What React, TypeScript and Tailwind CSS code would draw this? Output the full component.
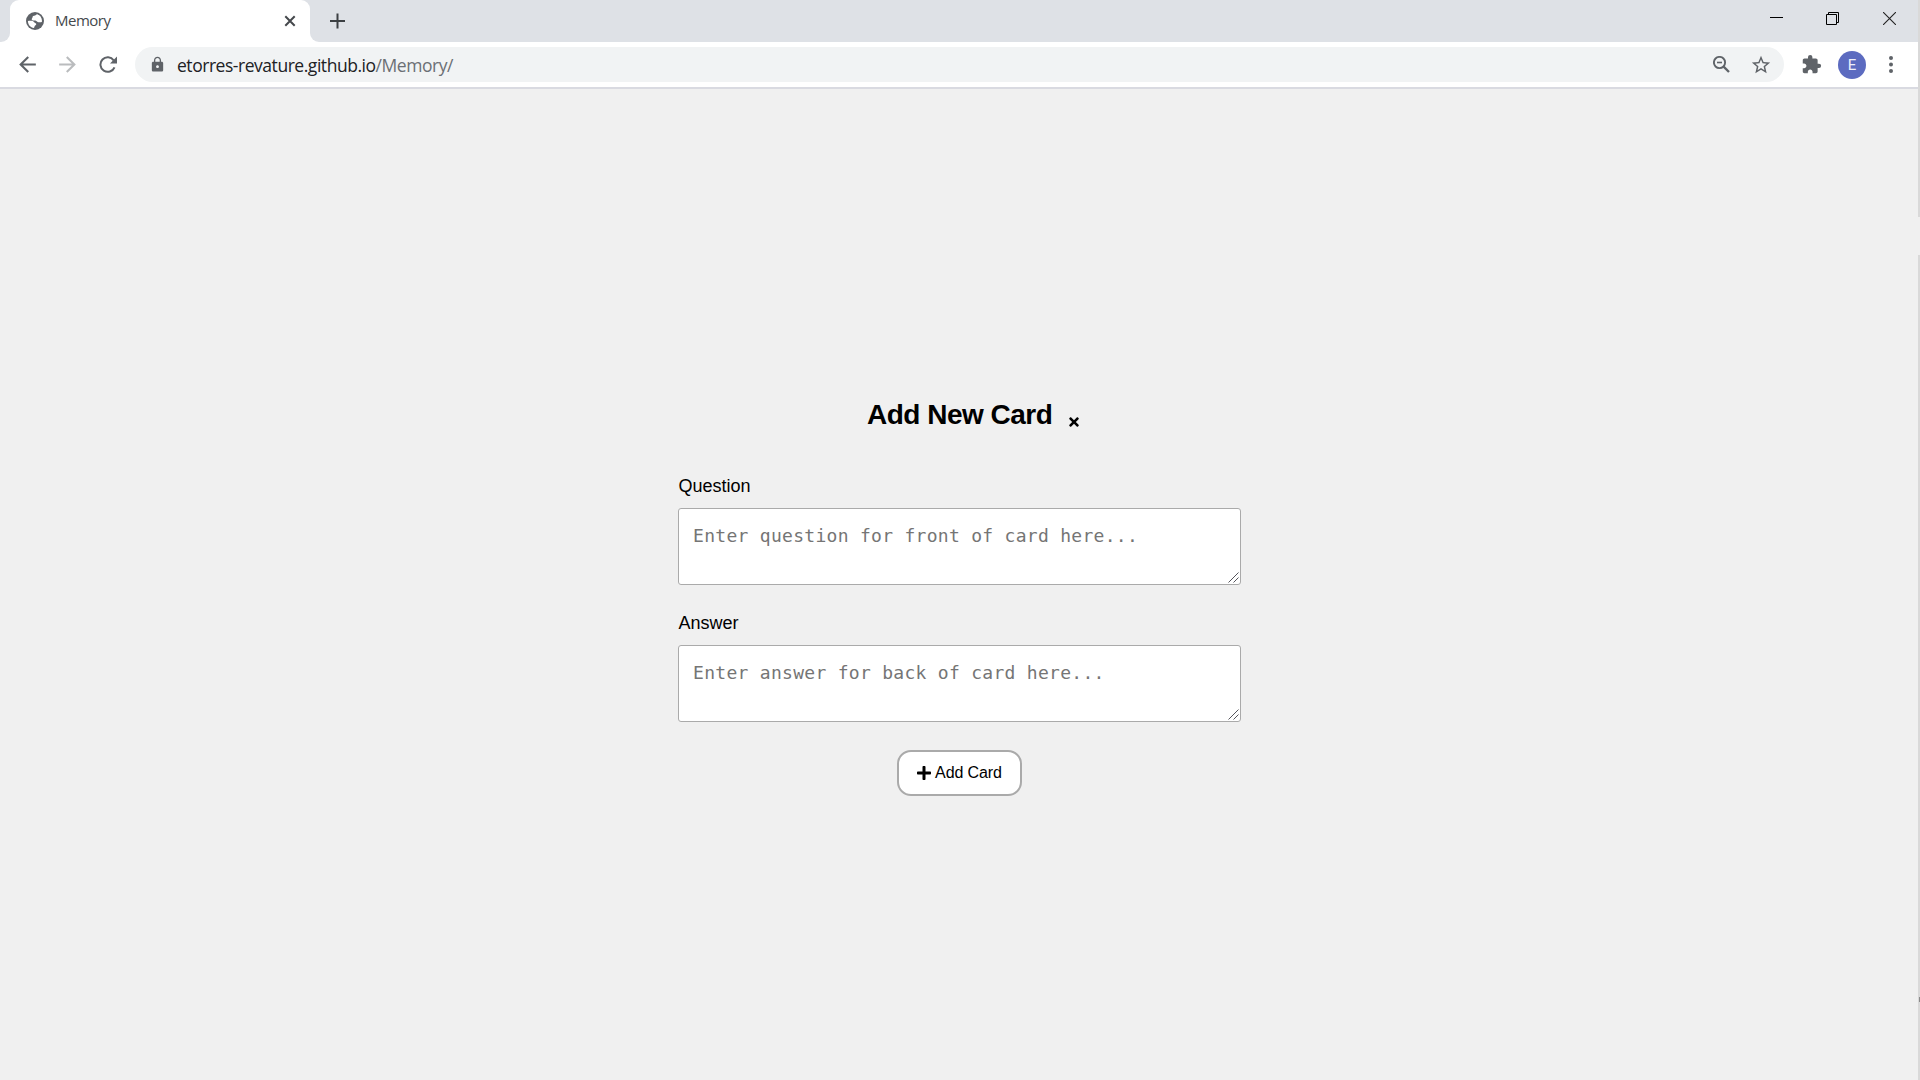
import React from 'react';
import { MdArrowBack, MdArrowForward, MdExtension, MdLock, MdStarBorder } from 'react-icons/md';
import { FaPlus, FaTimes } from 'react-icons/fa';

function Globe() {
  return (
    <svg className="h-[18px] w-[18px] shrink-0" viewBox="0 0 18 18">
      <circle cx="9" cy="9" r="9" fill="#5f6368" />
      <path d="M10.800 2.200C9.800 3.800 8.300 3.200 7.200 4c-1 .7-.4 1.600-1.100 2.300-.8.900-.3 2.100 1 2.200 1.600.1 3.200-.2 3.900 1.100.6 1 1.800.8 2.600.6.9-.2 1.300.1 2.300-.1.500-3.600-1.400-6.900-5.100-7.900Z" fill="#fff" />
      <path d="M11.300 2.400c1.500.5 2.600 1.400 3.400 2.600-.9 1.300-2.400 1.700-3.700 1.400-1-.3-1.300-1-.8-1.800.4-.7 1-1.200 1.100-2.200Z" fill="#fff" />
      <path d="M1.900 9c1.500-.4 3.400-.5 4.800.1 1.300.5 1.200 1.700 2.500 1.900 1.400.3 1.400 1.600.3 2.200-1 .5-.8 1.600-1.600 2.700C4.400 15.500 1.900 12.600 1.900 9Z" fill="#fff" />
    </svg>
  );
}

function TabBar() {
  return (
    <div className="flex h-[42px] bg-[#dee1e6]">
      <div className="flex w-[10px] shrink-0 items-end bg-white">
        <div className="h-full w-full rounded-br-[9px] bg-[#dee1e6]" />
      </div>
      <div className="w-[300px] shrink-0 bg-[#dee1e6]">
        <div className="flex h-[42px] items-center rounded-t-[9px] bg-white pl-4 pr-[14px]">
          <Globe />
          <span className="-mt-0.5 ml-[11px] flex-1 text-[15px] leading-5 tracking-[-0.500px] text-[#45494d]">Memory</span>
          <svg className="h-3 w-3" viewBox="0 0 12 12" stroke="#45484c" strokeWidth="2">
            <path d="M1.300 1.300 10.700 10.700M10.700 1.300 1.300 10.700" />
          </svg>
        </div>
      </div>
      <div className="w-[10px] shrink-0 bg-white">
        <div className="h-full w-full rounded-bl-[9px] bg-[#dee1e6]" />
      </div>
      <svg className="ml-[10px] mt-[13px] h-4 w-4" viewBox="0 0 16 16" stroke="#3c4043" strokeWidth="2">
        <path d="M0 8h15M7.500 .5v15" />
      </svg>
      <div className="flex-1" />
      <div className="flex pt-[12px]">
        <svg className="mr-[43px] h-[13px] w-[13px]" viewBox="0 0 13 13">
          <path d="M0 5.500h13" stroke="#000" />
        </svg>
        <svg className="mr-[44px] h-[13px] w-[13px]" viewBox="0 0 13 13" fill="none" stroke="#000">
          <path d="M.5 2.500h10v10H.5zM2.500 2.500v-2h10v10h-2" />
        </svg>
        <svg className="mr-[22px] h-[13px] w-[13px]" viewBox="0 0 13 13" stroke="#222" strokeWidth="1.100">
          <path d="M0 0 13 13M13 0 0 13" />
        </svg>
      </div>
    </div>
  );
}

function Toolbar() {
  return (
    <div className="flex h-[47px] items-center border-b-2 border-[#d9dae1] bg-white text-[#5f6368]">
      <MdArrowBack className="ml-[15px] h-[25px] w-[25px] shrink-0" />
      <MdArrowForward className="ml-[15px] h-[25px] w-[25px] shrink-0 text-[#babcbe]" />
      <svg className="ml-[19px] h-[18px] w-[18px] shrink-0" viewBox="0 0 18 18" fill="none" stroke="#5f6368" strokeWidth="2">
        <path d="M14.700 4.300A7.300 7.300 0 1 0 15.500 11.300" />
        <path d="M18 .5V7.500H11Z" fill="#5f6368" stroke="none" />
      </svg>
      <div className="ml-[18px] flex h-[35px] flex-1 items-center rounded-full bg-[#f1f3f4] pl-[14px] pr-[12px]">
        <MdLock className="h-[17px] w-[17px] shrink-0" />
        <span className="ml-[11px] flex-1 whitespace-nowrap text-[17.500px] leading-6 tracking-[-0.460px] text-[#202124]">
          etorres-revature.github.io<span className="text-[#6b6f74]">/Memory/</span>
        </span>
        <svg className="h-[17px] w-[17px]" viewBox="0 0 17 17" fill="none" stroke="#5f6368">
          <circle cx="6.500" cy="6.500" r="5.600" strokeWidth="1.900" />
          <path d="M4 6.500h5" strokeWidth="1.600" />
          <path d="M10.600 10.600 16 16" strokeWidth="2.300" />
        </svg>
        <MdStarBorder className="ml-[20px] h-[22px] w-[22px]" />
      </div>
      <MdExtension className="ml-[17px] h-[21px] w-[21px]" />
      <div className="ml-[16px] flex h-[28px] w-[28px] items-center justify-center rounded-full bg-[#5c6bc0] pt-px font-['Roboto',sans-serif] text-[15px] text-[#eef0fa]">
        E
      </div>
      <svg className="ml-[23px] mr-[25px] h-[17px] w-1" viewBox="0 0 4 17" fill="#5f6368">
        <circle cx="2" cy="2" r="2" />
        <circle cx="2" cy="8.500" r="2" />
        <circle cx="2" cy="15" r="2" />
      </svg>
    </div>
  );
}

function Field({ label, placeholder }: { label: string; placeholder: string }) {
  return (
    <label className="mb-[26px] block">
      <span className="mb-[10px] block h-[24px] pl-px text-[18px] leading-6 text-black">{label}</span>
      <span className="relative block h-[77px]">
        <textarea
          className="block h-[77px] w-full resize-none overflow-hidden rounded-[3px] border border-[#aaa] bg-white px-[14.500px] py-[15px] font-['DejaVu_Sans_Mono',monospace] text-[18px] leading-6 tracking-[0.290px] outline-none placeholder:text-[#757575]"
          placeholder={placeholder}
        />
        <svg className="absolute bottom-[2px] right-[2px] h-[11px] w-[11px]" viewBox="0 0 11 11" stroke="#55555c">
          <path d="M.5 10.500 10.500 .5M5.500 10.500l5-5" />
        </svg>
      </span>
    </label>
  );
}

export default function App() {
  return (
    <div className="flex h-[1080px] w-[1920px] overflow-hidden bg-[#f0f0f0] font-['Open_Sans',sans-serif]">
      <div className="flex w-[1918px] flex-col">
        <TabBar />
        <Toolbar />
        <main className="mx-auto w-[563px] pt-[306px] font-['Liberation_Sans',Arial,sans-serif] text-black">
          <div className="mb-[39px] flex h-[40px] justify-start pl-[189.500px]">
            <h2 className="text-[28px] font-bold leading-10 tracking-[-0.500px]">Add New Card</h2>
            <FaTimes className="ml-[15px] mt-[20px] h-[14px] w-[14px]" />
          </div>
          <Field label="Question" placeholder="Enter question for front of card here..." />
          <Field label="Answer" placeholder="Enter answer for back of card here..." />
          <button className="mx-auto mt-[28px] flex h-[46px] w-[125px] items-center justify-center rounded-[14px] border-2 border-[#aaa] bg-white text-[16px] tracking-[-0.100px]">
            <FaPlus className="-mt-px mr-[3px] h-[16px] w-[16px]" />
            Add Card
          </button>
        </main>
      </div>
      <div className="flex w-[2px] flex-col bg-[#d9d9d9]">
        <div className="mt-[217px] h-[38px] bg-[#f0f0f0]" />
        <div className="ml-px mt-[742px] h-[5px] bg-[#8a8a8a]" />
      </div>
    </div>
  );
}
